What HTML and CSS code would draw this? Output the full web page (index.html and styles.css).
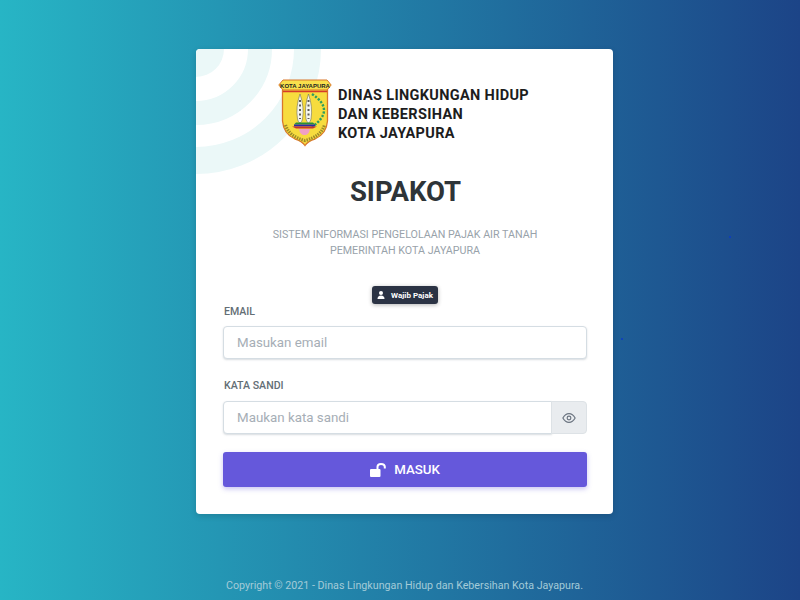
FILE: index.html
```html
<!DOCTYPE html>
<html lang="id">
<head>
<meta charset="utf-8">
<title>SIPAKOT</title>
<link rel="stylesheet" href="styles.css">
</head>
<body>
<span class="particle particle-a"></span>
<span class="particle particle-b"></span>
<main class="card">
  <svg class="rings" width="126" height="126" viewBox="0 0 126 126" aria-hidden="true">
    <circle class="ring-fill" cx="0" cy="0" r="28"/>
    <circle class="ring-line ring-mid" cx="0" cy="0" r="64"/>
    <circle class="ring-line ring-out" cx="0" cy="0" r="111.5"/>
  </svg>
  <div class="brand">
    <svg class="crest" width="54" height="68" viewBox="0 0 54 68" aria-hidden="true">
      <path d="M4.500 10 V42 Q5.500 55 17 60 Q24 62 27 66.500 Q30 62 37 60 Q48.500 55 49.500 42 V10 Z" fill="#f7dc3e" stroke="#d9772a" stroke-width="1.300"/>
      <path d="M.8 6 L5 1 H49 L53.200 6 L49 11 H5 Z" fill="#f9e04c" stroke="#d9772a" stroke-width="1"/>
      <text class="crest-title" x="27" y="8.500" text-anchor="middle">KOTA JAYAPURA</text>
      <path d="M5 12.500 H49" stroke="#d63a2a" stroke-width="1.300"/>
      <path d="M22 15 Q17.500 28 19.500 40 Q20 43 22 44 Q24 43 24.500 40 Q26.500 28 22 15 Z" fill="#f6f6ee" stroke="#6f6f5c" stroke-width=".6"/>
      <path d="M30.500 15 Q26 28 28 40 Q28.500 43 30.500 44 Q32.500 43 33 40 Q35 28 30.500 15 Z" fill="#f6f6ee" stroke="#6f6f5c" stroke-width=".6"/>
      <path d="M22 21 V40 M30.500 21 V40" stroke="#5d5d55" stroke-width="2" stroke-dasharray="2 2.500"/>
      <path d="M34 15 Q58 31 34 48" fill="none" stroke="#2f9e5f" stroke-width="2.400" stroke-dasharray="2.200 1.500"/>
      <path d="M18 43.500 H35 L37 45.500 H16 Z" fill="#2a8f3a"/>
      <path d="M16 45.500 H37 V47.500 H16 Z" fill="#2b2aa8"/>
      <path d="M14 47.500 H39 L35 49.500 H18 Z" fill="#c9352c"/>
      <path d="M21 50 Q22 56 26.500 56 Q31 56 32 50 Z" fill="#f1a0c4"/>
      <path d="M7.500 46 Q11 57.500 27 61.500 Q43 57.500 46.500 46" fill="none" stroke="#9c8a2a" stroke-width="3.200" stroke-dasharray="1.500 1"/>
    </svg>
    <p class="agency">DINAS LINGKUNGAN HIDUP<br>DAN KEBERSIHAN<br>KOTA JAYAPURA</p>
  </div>
  <h1 class="title">SIPAKOT</h1>
  <p class="subtitle">SISTEM INFORMASI PENGELOLAAN PAJAK AIR TANAH<br>PEMERINTAH KOTA JAYAPURA</p>
  <div class="badge-row">
    <span class="badge">
      <svg width="8" height="8" viewBox="0 0 8 8" aria-hidden="true"><circle cx="4" cy="2" r="2" fill="#fff"/><path d="M.5 8 Q.5 4.500 4 4.500 Q7.500 4.500 7.500 8 Z" fill="#fff"/></svg>
      Wajib Pajak
    </span>
  </div>
  <form class="form">
    <label class="label" for="email">EMAIL</label>
    <input class="input" id="email" type="text" placeholder="Masukan email">
    <label class="label label-pass" for="pass">KATA SANDI</label>
    <div class="group">
      <input class="input input-joined" id="pass" type="text" placeholder="Maukan kata sandi">
      <span class="addon">
        <svg width="14" height="14" viewBox="0 0 24 24" fill="none" stroke="#6b7480" stroke-width="2" aria-hidden="true"><path d="M1.500 12 C5 5.500 9 4.500 12 4.500 C15 4.500 19 5.500 22.500 12 C19 18.500 15 19.500 12 19.500 C9 19.500 5 18.500 1.500 12 Z"/><circle cx="12" cy="12" r="3.200"/></svg>
      </span>
    </div>
    <button class="submit" type="button">
      <svg width="16" height="14" viewBox="0 0 16 14" aria-hidden="true"><path d="M0 7 Q0 6 1 6 H9.500 Q10.500 6 10.500 7 V13 Q10.500 14 9.500 14 H1 Q0 14 0 13 Z" fill="#fff"/><path d="M7.500 6 V3.800 Q7.500 1 11 1 Q14.800 1 14.800 3.800 V5.500" fill="none" stroke="#fff" stroke-width="2"/></svg>
      MASUK
    </button>
  </form>
</main>
<footer class="footer">Copyright © 2021 - Dinas Lingkungan Hidup dan Kebersihan Kota Jayapura.</footer>
</body>
</html>
```
FILE: styles.css
```css
* { box-sizing: border-box; }
html, body { margin: 0; }
body {
  position: relative;
  height: 600px;
  overflow: hidden;
  padding-top: 49px;
  display: flex;
  flex-direction: column;
  align-items: center;
  font-family: Roboto, "Liberation Sans", sans-serif;
  background: linear-gradient(90deg, #27b5c5 0%, #1c4487 100%);
}
.particle {
  position: absolute;
  width: 2px;
  height: 2px;
  border-radius: 50%;
  background: #0b3bc4;
}
.particle-a { left: 729px; top: 236px; }
.particle-b { left: 621px; top: 338px; }
.card {
  position: relative;
  margin-left: 9px;
  width: 417px;
  height: 465px;
  padding: 0 26px 0 27px;
  overflow: hidden;
  background: #fff;
  border-radius: 4px;
  box-shadow: 0 2px 6px rgba(0, 0, 0, .15);
}
.rings { position: absolute; left: 0; top: 0; }
.ring-fill { fill: #ebf8f8; }
.ring-line { fill: none; stroke: #ebf8f8; }
.ring-mid { stroke-width: 24; }
.ring-out { stroke-width: 27; }
.brand {
  position: relative;
  display: flex;
  align-items: flex-start;
  margin: 31px 0 0 55px;
  height: 68px;
  gap: 5px;
}
.crest { margin-top: -1px; }
.crest-title { font: 700 6px "Liberation Sans", sans-serif; fill: #222; }
.agency {
  margin: 6px 0 0 1px;
  font-size: 14.500px;
  line-height: 19px;
  font-weight: 700;
  color: #1d1d1d;
  letter-spacing: .33px;
  white-space: nowrap;
}
.title {
  position: relative;
  margin: 27px 0 0 1px;
  text-align: center;
  font-size: 27.500px;
  line-height: 34px;
  font-weight: 700;
  color: #2e3438;
}
.subtitle {
  margin: 18px 0 0;
  text-align: center;
  font-size: 10.700px;
  line-height: 16px;
  color: #98a2aa;
}
.badge-row { display: flex; justify-content: center; margin-top: 27px; }
.badge {
  display: flex;
  align-items: center;
  gap: 6px;
  height: 18px;
  padding: 0 5px;
  border-radius: 3px;
  background: #2b3344;
  color: #fff;
  font-size: 8px;
  font-weight: 700;
  box-shadow: 0 1px 4px rgba(0, 0, 0, .3);
}
.form { display: flex; flex-direction: column; margin-top: 0; }
.label {
  margin-top: 1px;
  padding-left: 1px;
  font-size: 10.600px;
  line-height: 14px;
  font-weight: 500;
  color: #636e75;
}
.label-pass { margin-top: 20px; }
.input {
  margin-top: 7px;
  width: 100%;
  height: 33px;
  padding: 0 13px;
  border: 1px solid #d5dde3;
  border-radius: 4px;
  background: #fff;
  font: 400 13.330px Roboto, sans-serif;
  box-shadow: 0 1px 2px rgba(60, 80, 100, .2);
  outline: none;
}
.input::placeholder { color: #a6aeb6; opacity: 1; }
.group { display: flex; margin-top: 8px; }
.input-joined {
  margin-top: 0;
  flex: 1;
  min-width: 0;
  border-radius: 4px 0 0 4px;
}
.addon {
  display: flex;
  align-items: center;
  justify-content: center;
  width: 36px;
  flex: none;
  height: 33px;
  margin-left: -1px;
  border: 1px solid #dde2e6;
  border-radius: 0 4px 4px 0;
  background: #e9ecef;
}
.submit {
  display: flex;
  align-items: center;
  justify-content: center;
  gap: 8px;
  margin-top: 18px;
  height: 35px;
  border: 0;
  border-radius: 3px;
  background: #6558db;
  color: #fff;
  font: 500 13.300px Roboto, sans-serif;
  box-shadow: 0 2px 5px rgba(101, 88, 219, .35);
}
.footer {
  margin-top: 65px;
  margin-left: 9px;
  font-size: 10.700px;
  line-height: 14px;
  color: #a3cbd8;
}
```
